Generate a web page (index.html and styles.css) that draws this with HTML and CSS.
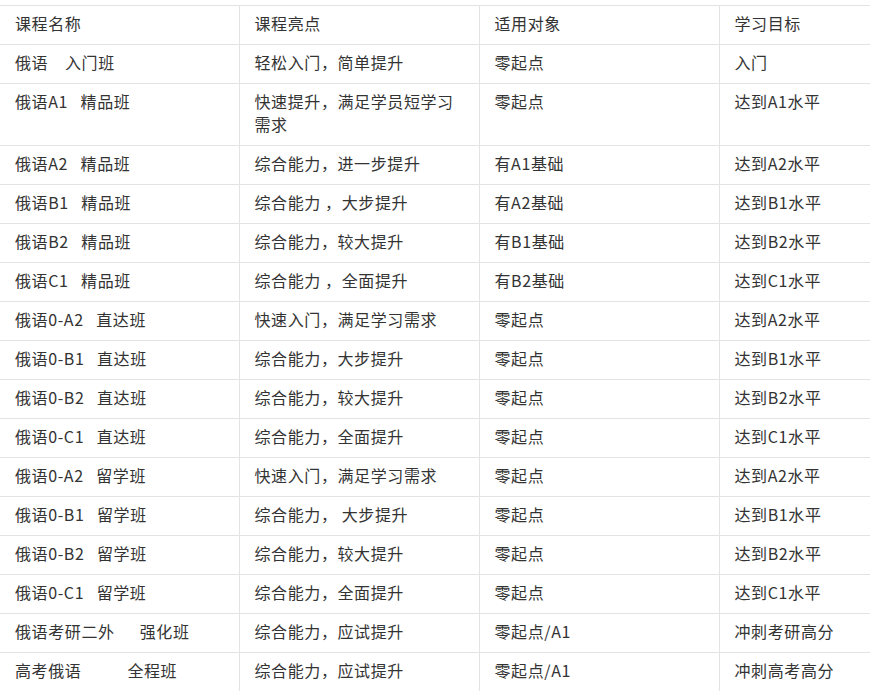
FILE: index.html
```html
<!DOCTYPE html>
<html lang="zh-CN">
<head>
<meta charset="utf-8">
<title>课程</title>
<link rel="stylesheet" href="styles.css">
</head>
<body>
<table class="course-table">
  <colgroup>
    <col class="c1"><col class="c2"><col class="c3"><col class="c4">
  </colgroup>
  <tbody>
    <tr><td>课程名称</td><td>课程亮点</td><td>适用对象</td><td>学习目标</td></tr>
    <tr><td>俄语    入门班</td><td>轻松入门，简单提升</td><td>零起点</td><td>入门</td></tr>
    <tr><td>俄语A1   精品班</td><td>快速提升，满足学员短学习需求</td><td>零起点</td><td>达到A1水平</td></tr>
    <tr><td>俄语A2   精品班</td><td>综合能力，进一步提升</td><td>有A1基础</td><td>达到A2水平</td></tr>
    <tr><td>俄语B1   精品班</td><td>综合能力 ，大步提升</td><td>有A2基础</td><td>达到B1水平</td></tr>
    <tr><td>俄语B2   精品班</td><td>综合能力，较大提升</td><td>有B1基础</td><td>达到B2水平</td></tr>
    <tr><td>俄语C1   精品班</td><td>综合能力 ，全面提升</td><td>有B2基础</td><td>达到C1水平</td></tr>
    <tr><td>俄语0-A2   直达班</td><td>快速入门，满足学习需求</td><td>零起点</td><td>达到A2水平</td></tr>
    <tr><td>俄语0-B1   直达班</td><td>综合能力，大步提升</td><td>零起点</td><td>达到B1水平</td></tr>
    <tr><td>俄语0-B2   直达班</td><td>综合能力，较大提升</td><td>零起点</td><td>达到B2水平</td></tr>
    <tr><td>俄语0-C1   直达班</td><td>综合能力，全面提升</td><td>零起点</td><td>达到C1水平</td></tr>
    <tr><td>俄语0-A2   留学班</td><td>快速入门，满足学习需求</td><td>零起点</td><td>达到A2水平</td></tr>
    <tr><td>俄语0-B1   留学班</td><td>综合能力， 大步提升</td><td>零起点</td><td>达到B1水平</td></tr>
    <tr><td>俄语0-B2   留学班</td><td>综合能力，较大提升</td><td>零起点</td><td>达到B2水平</td></tr>
    <tr><td>俄语0-C1   留学班</td><td>综合能力，全面提升</td><td>零起点</td><td>达到C1水平</td></tr>
    <tr><td>俄语考研二外      强化班</td><td>综合能力，应试提升</td><td>零起点/A1</td><td>冲刺考研高分</td></tr>
    <tr><td>高考俄语           全程班</td><td>综合能力，应试提升</td><td>零起点/A1</td><td>冲刺高考高分</td></tr>
  </tbody>
</table>
</body>
</html>
```
FILE: styles.css
```css
html, body {
  margin: 0;
  padding: 0;
  background: #fff;
}
body {
  padding-top: 5px;
  font-family: "Noto Sans CJK SC", "Noto Sans", sans-serif;
  font-size: 16px;
  color: #333;
}
.course-table {
  border-collapse: collapse;
  table-layout: fixed;
  width: 879px;
}
.c1 { width: 239px; }
.c2, .c3 { width: 240px; }
.c4 { width: 160px; }
.course-table td {
  border-top: 1px solid #e3e3e3;
  border-bottom: 1px solid #e3e3e3;
  border-right: 1px solid #e3e3e3;
  padding: 6px 18px 9px 15px;
  line-height: 23px;
  letter-spacing: 0.6px;
  vertical-align: top;
  white-space: pre-wrap;
  text-align: left;
}
.course-table td:last-child {
  border-right: none;
}
```
